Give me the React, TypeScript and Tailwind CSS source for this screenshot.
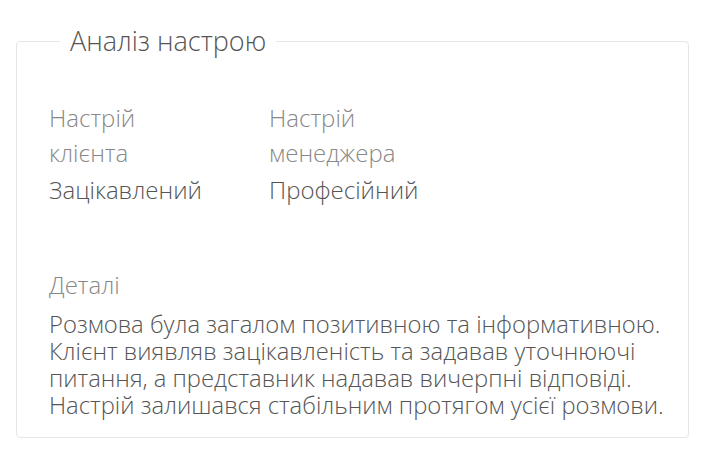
export default function App() {
  return (
    <div className="min-h-screen bg-white pl-4 pr-[21px] pt-[27px] font-['Open_Sans',sans-serif] font-light">
      <fieldset className="rounded-[4px] border border-[#e6e6e6] pb-[18px] pl-8 pr-3 pt-[45px]">
        <legend className="ml-[11px] px-[10px] text-[27px] leading-[28px] text-[#555555]">
          Аналіз настрою
        </legend>
        <div className="flex gap-[60px]">
          <div className="w-[160px]">
            <div className="text-[24px] leading-[35px] text-[#888888]">Настрій клієнта</div>
            <div className="mt-[2px] text-[24px] leading-[35px] text-[#555555]">Зацікавлений</div>
          </div>
          <div className="w-[160px]">
            <div className="text-[24px] leading-[35px] text-[#888888]">Настрій менеджера</div>
            <div className="mt-[2px] text-[24px] leading-[35px] text-[#555555]">Професійний</div>
          </div>
        </div>
        <div className="mt-[62px] text-[24px] leading-8 text-[#888888]">Деталі</div>
        <p className="mt-[10px] text-[23.8px] leading-[27px] text-[#555555]">
          Розмова була загалом позитивною та інформативною. Клієнт виявляв зацікавленість та задавав
          уточнюючі питання, а представник надавав вичерпні відповіді. Настрій залишався стабільним
          протягом усієї розмови.
        </p>
      </fieldset>
    </div>
  );
}
